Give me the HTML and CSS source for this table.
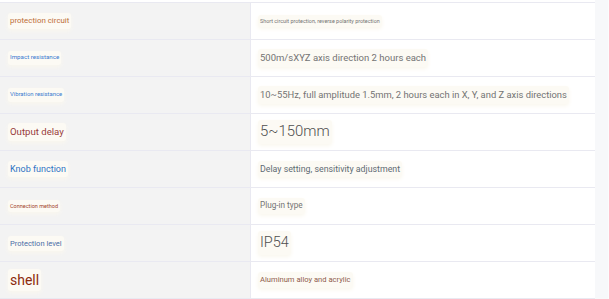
FILE: index.html
```html
<!DOCTYPE html>
<html>
<head>
<meta charset="utf-8">
<link rel="stylesheet" href="styles.css">
</head>
<body>
<div class="page">
  <div class="specs">
    <div class="row">
      <div class="key"><span class="hl k-orange s8">protection circuit</span></div>
      <div class="val"><span class="hl v-gray s45">Short circuit protection, reverse polarity protection</span></div>
    </div>
    <div class="row">
      <div class="key"><span class="hl k-blue s6">Impact resistance</span></div>
      <div class="val"><span class="hl v-gray s95">500m/sXYZ axis direction 2 hours each</span></div>
    </div>
    <div class="row">
      <div class="key"><span class="hl k-blue s55">Vibration resistance</span></div>
      <div class="val"><span class="hl v-gray s94">10~55Hz, full amplitude 1.5mm, 2 hours each in X, Y, and Z axis directions</span></div>
    </div>
    <div class="row">
      <div class="key"><span class="hl k-red s10">Output delay</span></div>
      <div class="val"><span class="hl v-dark light s15">5~150mm</span></div>
    </div>
    <div class="row">
      <div class="key"><span class="hl k-blue2 s9">Knob function</span></div>
      <div class="val"><span class="hl v-slate s88">Delay setting, sensitivity adjustment</span></div>
    </div>
    <div class="row">
      <div class="key"><span class="hl k-rust s55c">Connection method</span></div>
      <div class="val"><span class="hl v-gray s8b">Plug-in type</span></div>
    </div>
    <div class="row">
      <div class="key"><span class="hl k-steel s75">Protection level</span></div>
      <div class="val"><span class="hl v-dark light s145">IP54</span></div>
    </div>
    <div class="row">
      <div class="key"><span class="hl k-shell s14">shell</span></div>
      <div class="val"><span class="hl v-brown s76">Aluminum alloy and acrylic</span></div>
    </div>
  </div>
  <div class="side"></div>
</div>
</body>
</html>
```
FILE: styles.css
```css
html, body {
  margin: 0;
  padding: 0;
  background: #ffffff;
  font-family: Roboto, "Liberation Sans", sans-serif;
}
.page {
  display: flex;
  width: 609px;
  height: 299px;
  overflow: hidden;
}
.specs {
  width: 595px;
  padding-top: 2px;
  display: flex;
  flex-direction: column;
}
.side {
  flex: 1;
  background: #f7f8fa;
  border-right: 1px solid #fbfcfd;
}
.row {
  display: grid;
  grid-template-columns: 251px 1fr;
  height: 37px;
  border-top: 1px solid #e9e9f1;
  box-sizing: border-box;
}
.row:last-child {
  height: 38px;
  border-bottom: 1px solid #e9e9f1;
}
.key {
  background: #f3f3f3;
  border-right: 1px solid #e9e9f1;
  display: flex;
  align-items: center;
  padding-left: 8px;
}
.val {
  background: #ffffff;
  display: flex;
  align-items: center;
  padding-left: 7px;
}
.hl {
  padding: 3px 2px;
  background: #fcfaf4;
  border-radius: 3px;
  box-shadow: 0 2px 4px #faf7ee;
  line-height: 1.2;
  white-space: nowrap;
}
.light { font-weight: 300; }
.k-orange { color: #bd6e38; }
.k-blue { color: #3b7bd0; }
.k-blue2 { color: #2f72c4; }
.k-red { color: #983a3c; }
.k-rust { color: #a3452a; }
.k-steel { color: #4a6ea6; }
.k-shell { color: #8c2a0c; }
.v-gray { color: #737373; }
.v-dark { color: #4f4f4f; }
.v-slate { color: #5f6b73; }
.v-brown { color: #8f5a4c; }
.s45 { font-size: 5.4px; }
.s55 { font-size: 5.9px; }
.s55c { font-size: 5.5px; }
.s6 { font-size: 6.2px; }
.s75 { font-size: 7.5px; }
.s76 { font-size: 7.6px; }
.s8 { font-size: 7.9px; }
.s8b { font-size: 8.2px; }
.s88 { font-size: 8.8px; }
.s9 { font-size: 9px; }
.s94 { font-size: 9.4px; }
.s95 { font-size: 9.5px; }
.s10 { font-size: 9.6px; }
.s14 { font-size: 14px; }
.s145 { font-size: 14.5px; }
.s15 { font-size: 14.9px; }
```
